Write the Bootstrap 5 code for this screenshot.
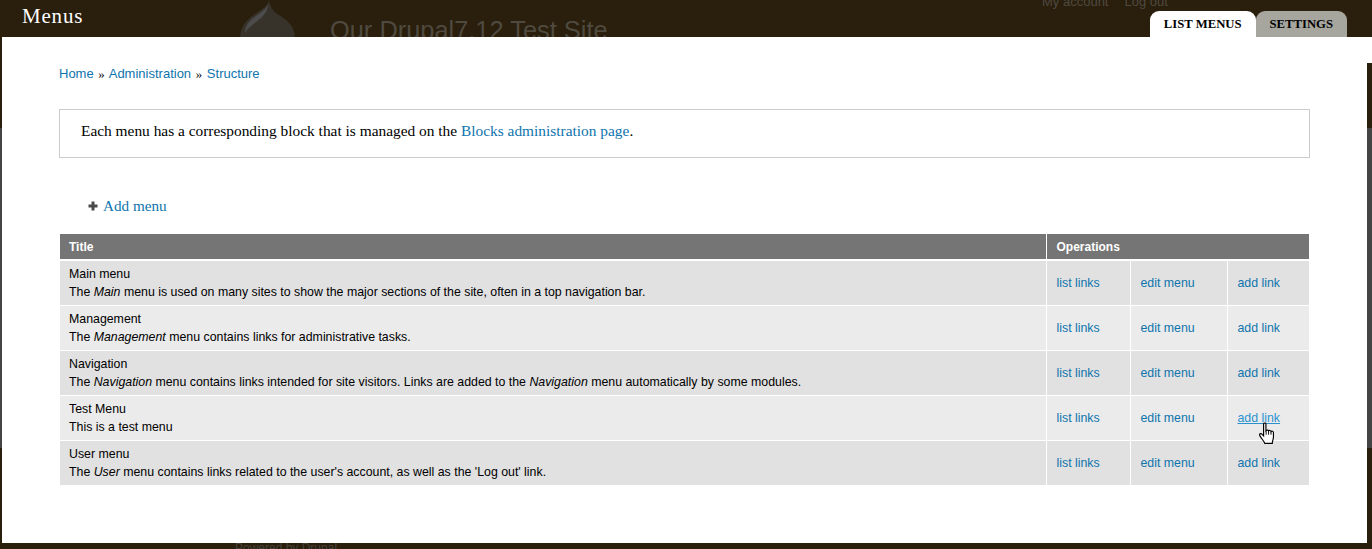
<!DOCTYPE html>
<html lang="en">
<head>
<meta charset="utf-8">
<title>Menus</title>
<link href="https://cdn.jsdelivr.net/npm/bootstrap@5.3.0/dist/css/bootstrap.min.css" rel="stylesheet">
<style>
html,body{height:549px;overflow:hidden}
body{background:#2a1e0c;font-family:"Liberation Sans",Arial,sans-serif;font-size:12px;color:#000;position:relative}
a{color:#0e74ad;text-decoration:none}
.bd-head{height:128px;background:#2a1e0c;overflow:hidden;color:#4e4a40}
.bd-logo{margin:0 35px 0 240px;flex:none}
.bd-site{font-size:25.4px;line-height:28px;margin-top:16px;width:712px;flex:none}
.bd-user{font-size:13px;line-height:14px;margin-top:-5px;gap:16px}
.bd-band{height:320px;background:#444}
.bd-foot{height:101px;padding:93px 0 0 235px;color:#45413a;font-size:12px;line-height:14px;overflow:hidden}
.ov{position:absolute;left:2px;right:5px;top:0;bottom:6px}
.ov-bar{height:37px;padding-right:20px}
.ov-title{font-family:"Liberation Serif",serif;font-size:21px;letter-spacing:.8px;line-height:24px;color:#fff;margin:4px 0 0 20px}
.ov-tabs{margin-top:11px;height:27px}
.ov-tab{font-family:"Liberation Serif",serif;font-weight:700;font-size:12.7px;line-height:26px;color:#000;padding:0 14px;border-radius:9px 9px 0 0;background:#a6a69f;height:27px;text-transform:uppercase}
.ov-tab.on{background:#fff;height:26px}
.ov-main{background:#fff;padding:28px 57px 0;position:relative}
.ov-main::after{content:"";position:absolute;right:-5px;top:0;width:5px;height:26px;background:#fff}
.crumbs{font-size:13px;line-height:18px;margin-bottom:26px}
.sep{font-family:"Liberation Serif",serif;margin:0 1px}
.helpbox{border:1px solid #ccc;height:49px;padding:11px 21px;font-family:"Liberation Serif",serif;font-size:15.4px;line-height:20px;margin-bottom:38px}
.addrow{font-family:"Liberation Serif",serif;font-size:15.2px;line-height:20px;padding-left:29px;gap:5px;margin-bottom:18px}
.menus{width:1249px;margin-left:1px;table-layout:fixed;border-collapse:collapse}
.menus th,.menus td{border:1px solid #fff;padding:0 9px 0 10px;vertical-align:middle;color:#000;box-shadow:none}
.menus tr>:first-child{border-left:0;padding-left:9px}
.menus tr>:last-child{border-right:0}
.menus thead tr>*{border-top:0}
.menus th{background:#757575;color:#fff;height:26px;font-size:12px;border-bottom-width:2px}
.menus td{height:45px;line-height:18px;font-size:12.35px}
.menus tbody tr:nth-child(odd) td{background:#e1e1e1}
.menus tbody tr:nth-child(even) td{background:#ebebeb}
.hot{color:#2a93cf;text-decoration:underline}
.holder{position:relative}
.hand{position:absolute;left:20px;top:13px}
</style>
</head>
<body>
<div class="bd-head d-flex">
  <svg class="bd-logo" width="55" height="128" viewBox="0 0 55 128"><path d="M29 0C28 6 22 9 15 14C6 20 0 28 0 38C0 52 12 62 27 62C42 62 55 52 55 38C55 24 44 18 36 13C32 10 30 5 29 0Z" fill="#37322a"/><path d="M28 4C26 10 18 14 12 19C8 23 5 27 5 33C9 26 17 22 22 17C26 13 28 9 28 4Z" fill="#4d4c4c"/></svg>
  <div class="bd-site">Our Drupal7.12 Test Site</div>
  <div class="bd-user d-flex"><span>My account</span><span>Log out</span></div>
</div>
<div class="bd-band"></div>
<div class="bd-foot">Powered by Drupal</div>

<div class="ov d-flex flex-column">
  <div class="ov-bar d-flex justify-content-between flex-shrink-0">
    <div class="ov-title">Menus</div>
    <div class="ov-tabs d-flex">
      <a class="ov-tab on" href="#">List menus</a>
      <a class="ov-tab" href="#">Settings</a>
    </div>
  </div>
  <div class="ov-main flex-grow-1">
    <div class="crumbs"><a href="#">Home</a> <span class="sep">»</span> <a href="#">Administration</a> <span class="sep">»</span> <a href="#">Structure</a></div>
    <div class="helpbox">Each menu has a corresponding block that is managed on the <a href="#">Blocks administration page</a>.</div>
    <div class="addrow d-flex align-items-center">
      <svg width="10" height="10" viewBox="0 0 10 10"><path d="M3.5 0.5H6.5V3.5H9.5V6.5H6.5V9.5H3.5V6.5H0.5V3.5H3.5Z" fill="#4a4a4a"/></svg>
      <a href="#">Add menu</a>
    </div>
    <table class="menus">
      <colgroup><col style="width:986px"><col style="width:84px"><col style="width:97px"><col style="width:82px"></colgroup>
      <thead><tr><th>Title</th><th colspan="3">Operations</th></tr></thead>
      <tbody>
        <tr><td>Main menu<br>The <em>Main</em> menu is used on many sites to show the major sections of the site, often in a top navigation bar.</td><td><a href="#">list links</a></td><td><a href="#">edit menu</a></td><td><a href="#">add link</a></td></tr>
        <tr><td>Management<br>The <em>Management</em> menu contains links for administrative tasks.</td><td><a href="#">list links</a></td><td><a href="#">edit menu</a></td><td><a href="#">add link</a></td></tr>
        <tr><td>Navigation<br>The <em>Navigation</em> menu contains links intended for site visitors. Links are added to the <em>Navigation</em> menu automatically by some modules.</td><td><a href="#">list links</a></td><td><a href="#">edit menu</a></td><td><a href="#">add link</a></td></tr>
        <tr><td>Test Menu<br>This is a test menu</td><td><a href="#">list links</a></td><td><a href="#">edit menu</a></td><td><span class="holder d-inline-block"><a class="hot" href="#">add link</a><svg class="hand" width="17" height="22" viewBox="0 0 14 19"><path d="M4.5 1.5C4.5 .6 6.5 .6 6.5 1.5V7.5C7 6.8 8.6 6.8 8.7 7.7C9.2 7 10.8 7.2 10.9 8.2C11.5 7.6 13 7.9 13 9V13C13 15 12 16 12 18.5H5.5C5 16.5 1 12.5 1 11C1 9.8 2.6 9.8 3.2 10.6L4.5 12Z" fill="#fff" stroke="#000" stroke-width="1"/><path d="M6.7 8V11M8.8 8V11M10.9 8.5V11" stroke="#000" stroke-width=".8" fill="none"/></svg></span></td></tr>
        <tr><td>User menu<br>The <em>User</em> menu contains links related to the user's account, as well as the 'Log out' link.</td><td><a href="#">list links</a></td><td><a href="#">edit menu</a></td><td><a href="#">add link</a></td></tr>
      </tbody>
    </table>
  </div>
</div>
<script src="https://cdn.jsdelivr.net/npm/bootstrap@5.3.0/dist/js/bootstrap.bundle.min.js"></script>
</body>
</html>
